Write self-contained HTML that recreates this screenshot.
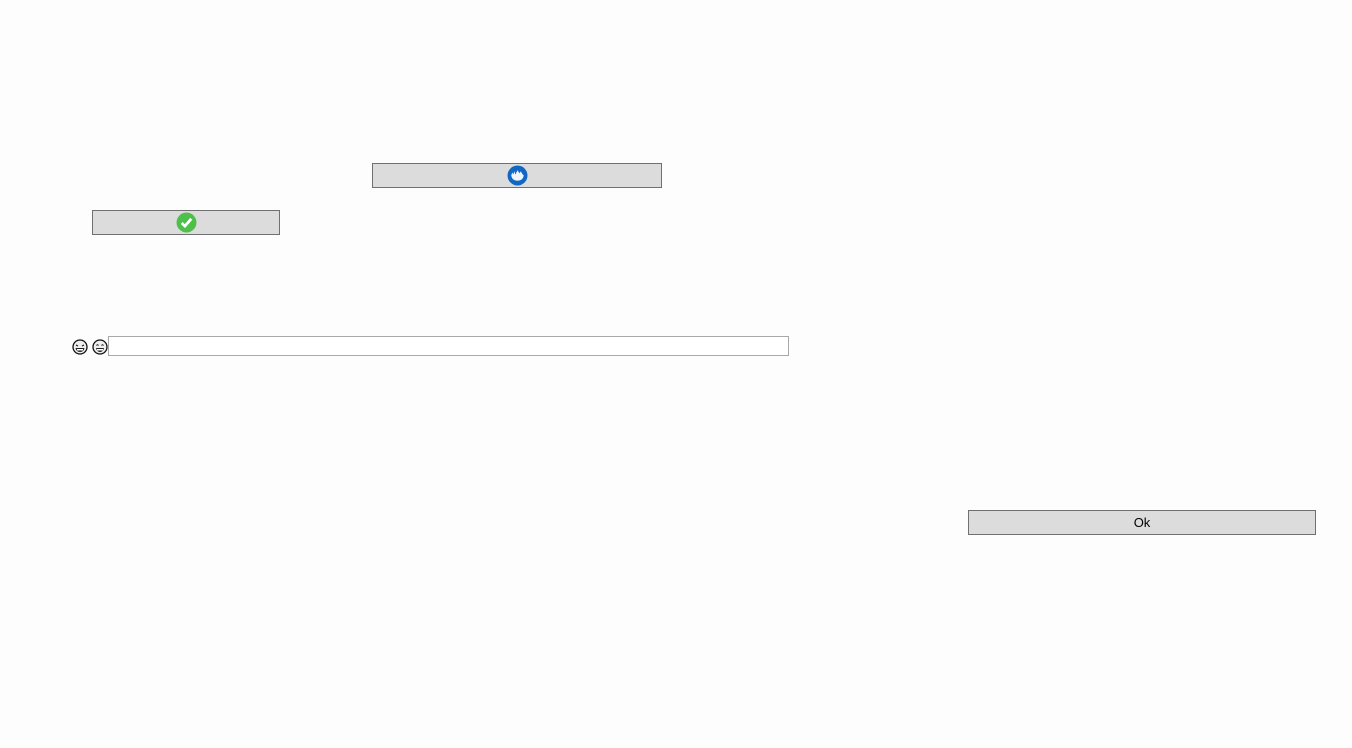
<!DOCTYPE html>
<html><head><style>
body{margin:0;width:1352px;height:748px;background:#fdfdfd;position:relative;font-family:"Liberation Sans",sans-serif;overflow:hidden}
.b{position:absolute;box-sizing:border-box;background:#dcdcdc;border:1px solid #707070;display:flex;align-items:center;justify-content:center;font-size:13px;color:#000}
</style></head><body>
<div class="b" style="left:372px;top:163px;width:290px;height:25px">
<svg width="21" height="21" viewBox="0 0 20 20"><circle cx="10" cy="10" r="9.5" fill="#1167c4"/><path d="M4 10 L5 7 L6 9 L7 6 L8 9 L10 5 L12 8 L13 6 L15 9 L16 10 Q15 15 10 15 Q5 15 4 10Z" fill="#eef4fb"/></svg>
</div>
<div class="b" style="left:92px;top:210px;width:188px;height:25px">
<svg width="21" height="21" viewBox="0 0 20 20"><circle cx="10" cy="10" r="9.5" fill="#4cc04a"/><path d="M5.5 10.5 L8.5 13.5 L14.5 6.5" stroke="#fff" stroke-width="2.6" fill="none"/></svg>
</div>
<svg style="position:absolute;left:72px;top:339px" width="16" height="16" viewBox="0 0 16 16"><circle cx="8" cy="8" r="7" fill="#eee" stroke="#111" stroke-width="1.3"/><path d="M4 6l2 1M12 6l-2 1" stroke="#111"/><path d="M3.5 9h9q-1 4-4.5 4t-4.5-4z" fill="#222"/><rect x="5" y="10" width="6" height="1.5" fill="#fff"/></svg>
<svg style="position:absolute;left:92px;top:339px" width="16" height="16" viewBox="0 0 16 16"><circle cx="8" cy="8" r="7" fill="#eee" stroke="#111" stroke-width="1.3"/><path d="M4.5 6.5q1-1.5 2 0M9.5 6.5q1-1.5 2 0" stroke="#111" fill="none"/><path d="M4 9h8q-1 4-4 4t-4-4z" fill="#222"/><rect x="5" y="10" width="6" height="1.5" fill="#fff"/></svg>
<div style="position:absolute;left:108px;top:336px;width:681px;height:20px;box-sizing:border-box;border:1px solid #a8a8a8;background:#fff"></div>
<div class="b" style="left:968px;top:510px;width:348px;height:25px">Ok</div>
</body></html>
